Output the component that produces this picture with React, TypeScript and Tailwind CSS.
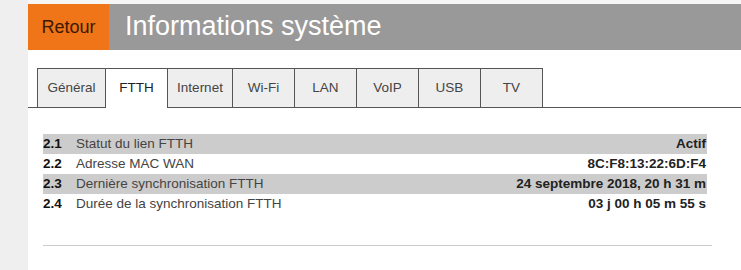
import React from "react";

const tabs = [
  { name: "Général", w: "w-[68px]" },
  { name: "FTTH", w: "w-[62px]" },
  { name: "Internet", w: "w-[65px]" },
  { name: "Wi-Fi", w: "w-[62px]" },
  { name: "LAN", w: "w-[62px]" },
  { name: "VoIP", w: "w-[62px]" },
  { name: "USB", w: "w-[62px]" },
  { name: "TV", w: "w-[63px]" },
];

const rows = [
  { num: "2.1", label: "Statut du lien FTTH", value: "Actif" },
  { num: "2.2", label: "Adresse MAC WAN", value: "8C:F8:13:22:6D:F4" },
  { num: "2.3", label: "Dernière synchronisation FTTH", value: "24 septembre 2018, 20 h 31 m" },
  { num: "2.4", label: "Durée de la synchronisation FTTH", value: "03 j 00 h 05 m 55 s" },
];

export default function App() {
  const active = "FTTH";

  return (
    <div className="flex min-h-[270px] bg-white font-['Liberation_Sans',Arial,sans-serif]">
      {/* left strip */}
      <div className="w-[28px] shrink-0 bg-[#efefef]" />

      <div className="flex-1 flex flex-col">
        <div className="h-[4px] bg-[#f6f6f6]" />

        {/* header */}
        <div className="flex h-[46px]">
          <div className="w-[81px] flex items-center justify-center bg-[#f07418] text-[18px] text-[#3b1a00]">
            Retour
          </div>
          <div className="flex-1 flex items-center bg-[#999999] pl-[16px] pb-[2px] text-[27px] text-white">
            Informations système
          </div>
        </div>

        {/* tabs */}
        <div className="flex mt-[18px] h-[40px]">
          <div className="w-[9px] border-b border-[#555]" />
          {tabs.map((t, i) => (
            <div
              key={t.name}
              className={
                "flex items-center justify-center border-t border-l border-[#555] text-[13.5px] " +
                t.w +
                " " +
                (i === tabs.length - 1 ? "border-r " : "") +
                (t.name === active
                  ? "bg-white text-[#222]"
                  : "bg-[#eeeeee] border-b text-[#444]")
              }
            >
              {t.name}
            </div>
          ))}
          <div className="flex-1 border-b border-[#555]" />
        </div>

        {/* table */}
        <div className="ml-[15px] mt-[26px] w-[664px] text-[13.5px]">
          {rows.map((r, i) => (
            <div
              key={r.num}
              className={
                "flex items-center h-[20px] " + (i % 2 === 0 ? "bg-[#cccccc]" : "bg-white")
              }
            >
              <span className="w-[33px] font-bold text-[#111]">{r.num}</span>
              <span className="flex-1 text-[#444]">{r.label}</span>
              <span className="pr-[1px] font-bold text-[#222]">{r.value}</span>
            </div>
          ))}
        </div>

        <div className="ml-[15px] mt-[31px] w-[669px] border-t border-[#cccccc]" />
      </div>
    </div>
  );
}
